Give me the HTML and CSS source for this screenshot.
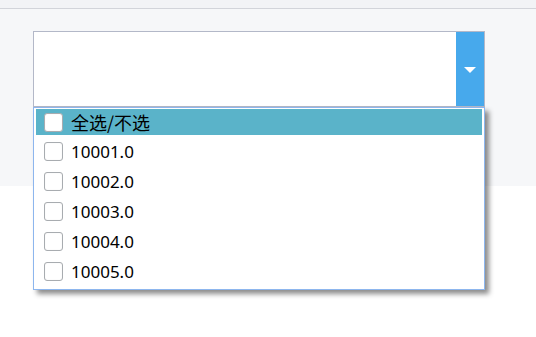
FILE: index.html
```html
<!DOCTYPE html>
<html>
<head>
<meta charset="utf-8">
<link rel="stylesheet" href="styles.css">
</head>
<body>
<div class="page">
<div class="topbar"></div>
<div class="panel">
  <div class="combo">
    <div class="combo-field"></div>
    <div class="combo-btn">
      <svg width="12" height="6" viewBox="0 0 12 6"><polygon points="0,0 12,0 6,6" fill="#fff"/></svg>
    </div>
    <div class="dropdown">
      <div class="item item-all"><span class="cb"></span><span class="label cjk">全选/不选</span></div>
      <div class="item"><span class="cb"></span><span class="label">10001.0</span></div>
      <div class="item"><span class="cb"></span><span class="label">10002.0</span></div>
      <div class="item"><span class="cb"></span><span class="label">10003.0</span></div>
      <div class="item"><span class="cb"></span><span class="label">10004.0</span></div>
      <div class="item"><span class="cb"></span><span class="label">10005.0</span></div>
    </div>
  </div>
</div>
</div>
</body>
</html>
```
FILE: styles.css
```css
html, body {
  margin: 0;
  padding: 0;
  background: #fff;
  font-family: "Noto Sans", "Noto Sans CJK SC", sans-serif;
}
.page {
  min-height: 337px;
  background: #fff;
}
.topbar {
  height: 8px;
  background: #f2f3f6;
  border-bottom: 1px solid #d2d4da;
}
.panel {
  height: 155px;
  background: #f6f7f9;
  padding: 22px 0 0 33px;
}
.combo {
  position: relative;
  z-index: 1;
  width: 452px;
  height: 76px;
  box-sizing: border-box;
  border: 1px solid #b3b8c8;
  background: #fff;
  display: flex;
}
.combo-field {
  flex: 1;
}
.combo-btn {
  width: 28px;
  background: #47a9ec;
  display: flex;
  align-items: center;
  justify-content: center;
}
.combo-btn svg {
  display: block;
  margin-top: 2px;
}
.dropdown {
  position: absolute;
  z-index: 2;
  left: -1px;
  top: 75px;
  width: 452px;
  box-sizing: border-box;
  border: 1px solid #8db6ee;
  padding: 1px 2px 3px 2px;
  background: #fff;
  box-shadow: 4px 4px 5px rgba(0, 0, 0, 0.45);
}
.item {
  height: 30px;
  display: flex;
  align-items: center;
  padding-left: 8px;
  font-size: 17px;
  color: #000;
}
.item-all {
  height: 26px;
  margin-bottom: 1px;
  background: #5ab3c9;
}
.cb {
  width: 17px;
  height: 17px;
  border: 1px solid #a8acb0;
  border-radius: 3px;
  background: #fff;
  box-shadow: inset 0 0 1px rgba(0,0,0,0.15);
  flex: none;
}
.label {
  margin-left: 8px;
  line-height: 1;
}
.cjk {
  font-family: "Noto Sans CJK SC", sans-serif;
  font-size: 18px;
}
```
